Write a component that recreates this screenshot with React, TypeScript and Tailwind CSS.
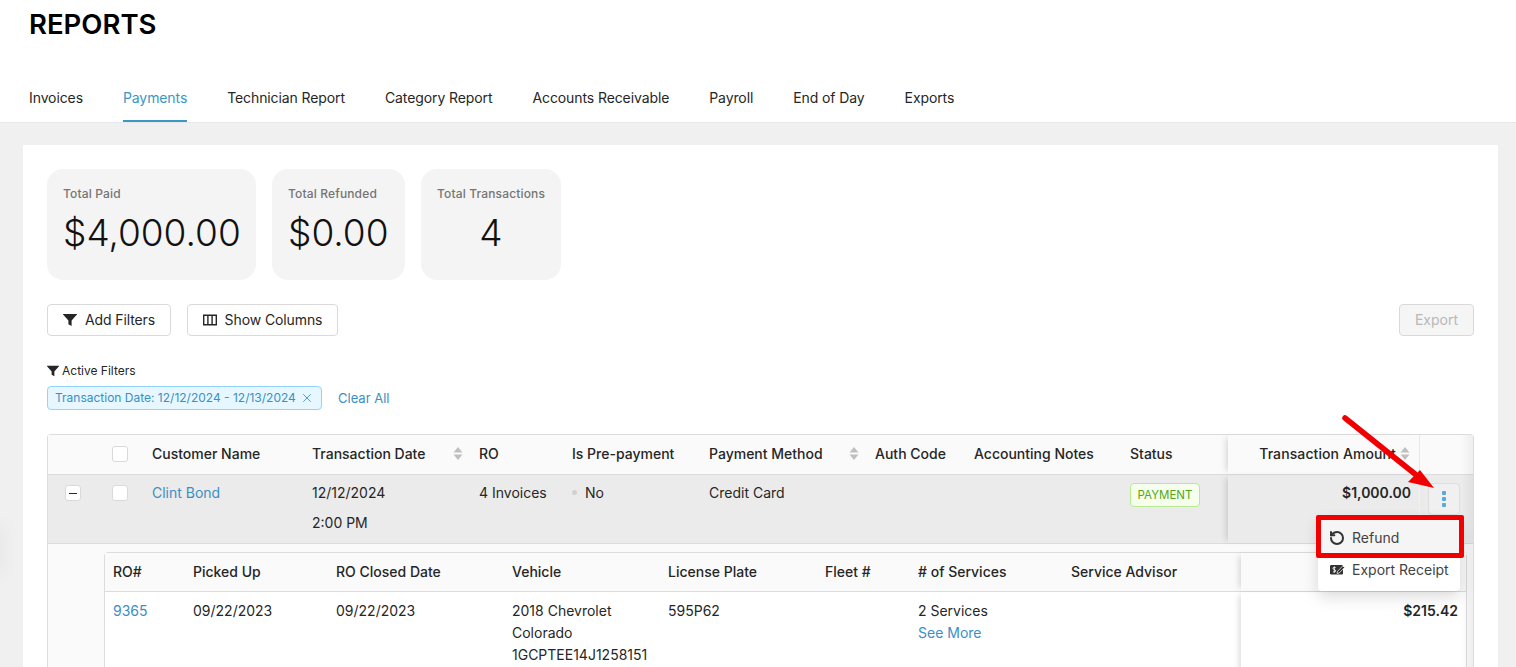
import React from "react";
import { RotateCcw, X } from "lucide-react";

const tabs = ["Invoices", "Payments", "Technician Report", "Category Report", "Accounts Receivable", "Payroll", "End of Day", "Exports"];

function Funnel(props: { className: string }) {
  return (
    <svg className={props.className} viewBox="0 0 14 14" fill="currentColor">
      <path d="M0.3 1h13.4c.3 0 .4.3.3.5L8.6 7.6V13L5.4 11.3V7.6L0 1.5c-.1-.2 0-.5.3-.5z" />
    </svg>
  );
}

function Sorter() {
  return (
    <svg className="h-[13px] w-[10px] text-[#bfbfbf]" viewBox="0 0 10 13" fill="currentColor">
      <path d="M5 0l4.5 5.5h-9z" />
      <path d="M5 13L.5 7.5h9z" />
    </svg>
  );
}

function Checkbox() {
  return <span className="block h-4 w-4 rounded-[3px] border border-[#d9d9d9] bg-white" />;
}

function HeaderCell(props: { label: string; width: string; sort?: boolean }) {
  return (
    <div className={`${props.width} flex shrink-0 items-center justify-between pl-2 pr-[8px] font-medium text-[#262626]`}>
      <span>{props.label}</span>
      {props.sort && <Sorter />}
    </div>
  );
}

function Stat(props: { label: string; value: string; width: string; center?: boolean }) {
  return (
    <div className={`${props.width} h-[111px] rounded-2xl bg-[#f4f4f4] px-4 pt-[17px]`}>
      <div className="whitespace-nowrap text-xs font-medium leading-4 tracking-[0.15px] text-[#757575]">{props.label}</div>
      <div className={`mt-[7px] text-[37px] font-light leading-[48px] text-[#111] ${props.center ? "text-center" : ""}`}>{props.value}</div>
    </div>
  );
}

export default function App() {
  return (
    <div className="relative h-[667px] overflow-hidden bg-[#f0f0f0] text-sm text-[#262626] [font-family:Inter,sans-serif]">
      <div className="h-[123px] border-b border-[#e8e8e8] bg-white px-[29px]">
        <h1 className="pt-[6px] text-[27.5px] font-semibold leading-9 text-black">REPORTS</h1>
        <div className="mt-[33px] flex gap-10 tracking-[-0.1px]">
          {tabs.map((t) => (
            <div
              key={t}
              className={t === "Payments" ? "h-[47px] border-b-2 border-[#3b97c4] pt-[13px] leading-5 text-[#3b97c4]" : "h-[47px] pt-[13px] leading-5"}
            >
              {t}
            </div>
          ))}
        </div>
      </div>

      <div className="ml-[23px] mt-[22px] w-[1475px] bg-white p-6">
        <div className="flex gap-4">
          <Stat label="Total Paid" value="$4,000.00" width="w-[209px]" />
          <Stat label="Total Refunded" value="$0.00" width="w-[133px]" />
          <Stat label="Total Transactions" value="4" width="w-[140px]" center />
        </div>

        <div className="mt-6 flex justify-between">
          <div className="flex gap-4">
            <button className="flex h-8 w-[124px] items-center justify-center gap-2 rounded border border-[#d9d9d9] bg-white tracking-[-0.1px]">
              <Funnel className="h-[14px] w-[14px]" />
              Add Filters
            </button>
            <button className="flex h-8 w-[151px] items-center justify-center gap-2 rounded border border-[#d9d9d9] bg-white tracking-[-0.1px]">
              <svg className="h-[14px] w-[14px]" viewBox="0 0 14 14" fill="none" stroke="currentColor" strokeWidth="1.4">
                <path d="M.7 2.2h12.6v9.6H.7zM4.9 2.2v9.6M9.1 2.2v9.6" />
              </svg>
              Show Columns
            </button>
          </div>
          <button className="h-8 w-[75px] rounded border border-[#d9d9d9] bg-[#f5f5f5] text-[#b8b8b8]">Export</button>
        </div>

        <div className="mt-[27px] flex items-center gap-[3px] text-xs leading-4">
          <Funnel className="h-3 w-3 text-[#262626]" />
          Active Filters
        </div>
        <div className="mt-[7px] flex items-center gap-4">
          <div className="flex h-6 w-[275px] items-center justify-between rounded border border-[#91d5ff] bg-[#e6f7ff] px-[7px] text-xs text-[#3b8fc4]">
            <span>Transaction Date: 12/12/2024 - 12/13/2024</span>
            <X className="h-[14px] w-[14px]" strokeWidth={1.5} />
          </div>
          <span className="text-[13px] text-[#3b8fc4]">Clear All</span>
        </div>

        <div className="relative mt-6 rounded-t border border-b-0 border-[#dcdcdc]">
          <div className="flex h-[40px] border-b border-[#dcdcdc] bg-[#fafafa] pb-[2px]">
            <div className="w-14 shrink-0" />
            <div className="flex w-10 shrink-0 items-center pl-2"><Checkbox /></div>
            <HeaderCell label="Customer Name" width="w-[160px]" />
            <HeaderCell label="Transaction Date" width="w-[167px]" sort />
            <HeaderCell label="RO" width="w-[93px]" />
            <HeaderCell label="Is Pre-payment" width="w-[137px]" />
            <HeaderCell label="Payment Method" width="w-[166px]" sort />
            <HeaderCell label="Auth Code" width="w-[99px]" />
            <HeaderCell label="Accounting Notes" width="w-[156px]" />
            <HeaderCell label="Status" width="w-[106px]" />
            <div className="-mb-[2px] flex w-[192px] shrink-0 items-center justify-end gap-[4px] border-r border-[#e8e8e8] pb-[2px] pr-[9px] font-medium tracking-[0.1px] shadow-[-5px_0_6px_-3px_rgba(0,0,0,0.14)]">
              Transaction Amount <Sorter />
            </div>
            <div className="flex-1" />
          </div>

          <div className="flex h-[69px] border-b border-[#dcdcdc] bg-[#ebebeb]">
            <div className="w-14 shrink-0 pl-[17px] pt-[10px]">
              <span className="flex h-4 w-4 items-center justify-center rounded-[3px] border border-[#d9d9d9] bg-white">
                <span className="h-px w-2 bg-[#262626]" />
              </span>
            </div>
            <div className="w-10 shrink-0 pl-2 pt-[10px]"><Checkbox /></div>
            <div className="w-[160px] shrink-0 pl-2 pt-[8px] leading-5 text-[#3b8fc4]">Clint Bond</div>
            <div className="w-[167px] shrink-0 pl-2 pt-[3px] leading-[30px]">
              12/12/2024
              <br />
              2:00 PM
            </div>
            <div className="w-[93px] shrink-0 pl-2 pt-[8px] leading-5">4 Invoices</div>
            <div className="flex w-[137px] shrink-0 items-start gap-2 pl-2 pt-[8px] leading-5">
              <span className="mt-[7px] h-[5px] w-[5px] rounded-full bg-[#d0d0d0]" />
              No
            </div>
            <div className="w-[166px] shrink-0 pl-2 pt-[8px] leading-5">Credit Card</div>
            <div className="w-[99px] shrink-0" />
            <div className="w-[156px] shrink-0" />
            <div className="w-[106px] shrink-0 pl-2 pt-[8px]">
              <span className="block w-[70px] rounded border border-[#b7eb8f] bg-[#f6ffed] text-center text-[11.5px] leading-[22px] text-[#52a815]">PAYMENT</span>
            </div>
            <div className="w-[192px] shrink-0 border-r border-[#f0f0f0] pr-[8px] pt-[8px] text-right font-semibold leading-5 shadow-[-5px_0_6px_-3px_rgba(0,0,0,0.14)]">$1,000.00</div>
            <div className="flex-1 pl-2 pt-[8px]">
              <span className="flex h-8 w-8 flex-col items-center justify-center gap-[2px] rounded border border-[#dedede] bg-[#f0f0f0]">
                <i className="h-1 w-1 rounded-[1px] bg-[#5aa9dc]" />
                <i className="h-1 w-1 rounded-[1px] bg-[#5aa9dc]" />
                <i className="h-1 w-1 rounded-[1px] bg-[#5aa9dc]" />
              </span>
            </div>
          </div>

          <div className="h-[200px] bg-[#fafafa] pl-[56px] pr-[6px] pt-2">
            <div className="h-full rounded-t border border-[#dcdcdc] bg-white">
              <div className="flex h-[39px] items-center border-b border-[#dcdcdc] bg-[#fafafa] pb-[1px] font-medium">
                <div className="w-[80px] shrink-0 pl-2">RO#</div>
                <div className="w-[143px] shrink-0 pl-2">Picked Up</div>
                <div className="w-[176px] shrink-0 pl-2">RO Closed Date</div>
                <div className="w-[156px] shrink-0 pl-2">Vehicle</div>
                <div className="w-[157px] shrink-0 pl-2">License Plate</div>
                <div className="w-[93px] shrink-0 pl-2">Fleet #</div>
                <div className="w-[153px] shrink-0 pl-2">
                  # of Services
                </div>
                <div className="w-[178px] shrink-0 pl-2">Service Advisor</div>
                <div className="-mb-[1px] h-[38px] flex-1 shadow-[-5px_0_6px_-3px_rgba(0,0,0,0.14)]" />
              </div>
              <div className="flex h-full leading-[22px]">
                <div className="w-[80px] shrink-0 pl-2 pt-2 text-[#3b8fc4]">9365</div>
                <div className="w-[143px] shrink-0 pl-2 pt-2">09/22/2023</div>
                <div className="w-[176px] shrink-0 pl-2 pt-2">09/22/2023</div>
                <div className="w-[156px] shrink-0 pl-2 pt-2">
                  2018 Chevrolet
                  <br />
                  Colorado
                  <br />
                  1GCPTEE14J1258151
                </div>
                <div className="w-[157px] shrink-0 pl-2 pt-2">595P62</div>
                <div className="w-[93px] shrink-0" />
                <div className="w-[153px] shrink-0 pl-2 pt-2">
                  2 Services
                  <br />
                  <span className="text-[#3b8fc4]">See More</span>
                </div>
                <div className="w-[178px] shrink-0" />
                <div className="flex-1 pr-2 pt-2 text-right font-semibold shadow-[-5px_0_6px_-3px_rgba(0,0,0,0.14)]">$215.42</div>
              </div>
            </div>
          </div>

          <div className="pointer-events-none absolute inset-y-0 right-0 w-[12px] bg-gradient-to-r from-transparent to-black/5" />
        </div>
      </div>

      <div className="absolute -left-2 top-[525px] h-[50px] w-[10px] rounded-full bg-black/5 blur-sm" />

      {/* row action menu, opened over the table */}
      <div className="absolute left-[1318px] top-[517px] h-[74px] w-[142px] rounded bg-white shadow-[0_6px_16px_rgba(0,0,0,0.14)]">
        <div className="flex h-[41px] items-center gap-[7px] bg-[#f5f5f5] pl-[11px] text-[#434343]">
          <RotateCcw className="h-4 w-4 text-[#333]" strokeWidth={3} />
          Refund
        </div>
        <div className="flex h-[33px] items-start gap-[7px] pl-3 text-[#434343]">
          <svg className="mt-[7px] h-[10px] w-[15px]" viewBox="0 0 15 10">
            <rect x="0" y="0" width="13" height="9.5" rx="1.2" fill="#333" />
            <path d="M5.6 2.6C5 2 3 2 3 3.4s2.7 1 2.7 2.4S3.6 7.2 3 6.6M4.3 1.6v6" fill="none" stroke="#fff" strokeWidth="0.9" />
            <path d="M7 8.4l.5-2L12.8.9l1.8 1.6-5.4 5.5z" fill="#333" stroke="#fff" strokeWidth="0.7" />
          </svg>
          <span className="pt-px leading-[22px]">Export Receipt</span>
        </div>
      </div>

      {/* annotation: red box and arrow */}
      <div className="pointer-events-none absolute left-[1316px] top-[515px] h-[43px] w-[148px] rounded-[2px] border-[5px] border-[#f00000]" />
      <svg className="pointer-events-none absolute left-[1340px] top-[414px] h-[80px] w-[100px]" viewBox="0 0 100 80">
        <path d="M5 4L75 60" stroke="#f00000" strokeWidth="5.5" strokeLinecap="round" />
        <path d="M94 74L80 56 68 68z" fill="#f00000" />
      </svg>
    </div>
  );
}
